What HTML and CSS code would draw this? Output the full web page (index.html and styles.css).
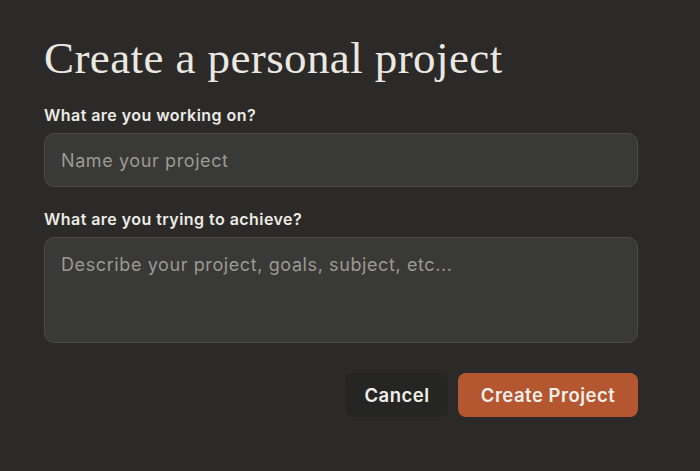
FILE: index.html
```html
<!DOCTYPE html>
<html lang="en">
<head>
    <meta charset="UTF-8">
    <meta name="viewport" content="width=device-width, initial-scale=1.0">
    <title>Create a personal project</title>
    <link rel="stylesheet" href="styles.css">
</head>
<body>
    <div class="dialog">
        <h1>Create a personal project</h1>

        <div class="field">
            <label for="name">What are you working on?</label>
            <input type="text" id="name" placeholder="Name your project">
        </div>
        <div class="field">
            <label for="goal">What are you trying to achieve?</label>
            <textarea id="goal" placeholder="Describe your project, goals, subject, etc..."></textarea>
        </div>

        <div class="actions">
            <button class="btn cancel">Cancel</button>
            <button class="btn primary">Create Project</button>
        </div>
    </div>
</body>
</html>
```

FILE: styles.css
```css
body {
    margin: 0;
    background-color: #2b2a28;
    font-family: Inter, "Noto Sans", sans-serif;
    color: #ecebe6;
}
.dialog {
    width: 594px;
    padding: 32px 0 0 44px;
}
h1 {
    margin: 0 0 21px;
    font-family: "Liberation Serif", serif;
    font-weight: 400;
    font-size: 45px;
    line-height: 52px;
    letter-spacing: 0.4px;
    color: #ebe8e1;
}
.field {
    margin-bottom: 22px;
}
label {
    display: block;
    font-size: 16px;
    font-weight: 600;
    line-height: 20px;
    letter-spacing: 0.45px;
    margin-bottom: 8px;
}
input,
textarea {
    display: block;
    box-sizing: border-box;
    width: 100%;
    margin: 0;
    background-color: #393937;
    border: 1px solid #4a4947;
    border-radius: 10px;
    color: #ecebe6;
    font-family: Inter, "Noto Sans", sans-serif;
    font-size: 18px;
    line-height: 22px;
    letter-spacing: 0.6px;
    padding: 0 16px;
    outline: none;
}
input {
    height: 54px;
}
textarea {
    height: 106px;
    padding-top: 16px;
    resize: none;
}
input::placeholder,
textarea::placeholder {
    color: #9b9992;
}
.actions {
    display: flex;
    justify-content: flex-end;
    gap: 10px;
    margin-top: 30px;
}
.btn {
    border: none;
    border-radius: 8px;
    height: 44px;
    padding: 0;
    font-family: Inter, "Noto Sans", sans-serif;
    font-size: 18.5px;
    font-weight: 600;
    letter-spacing: 0.5px;
    color: #f1efe9;
    cursor: pointer;
}
.cancel {
    background-color: #252523;
    width: 102px;
}
.primary {
    background-color: #b4562f;
    width: 180px;
}
```
